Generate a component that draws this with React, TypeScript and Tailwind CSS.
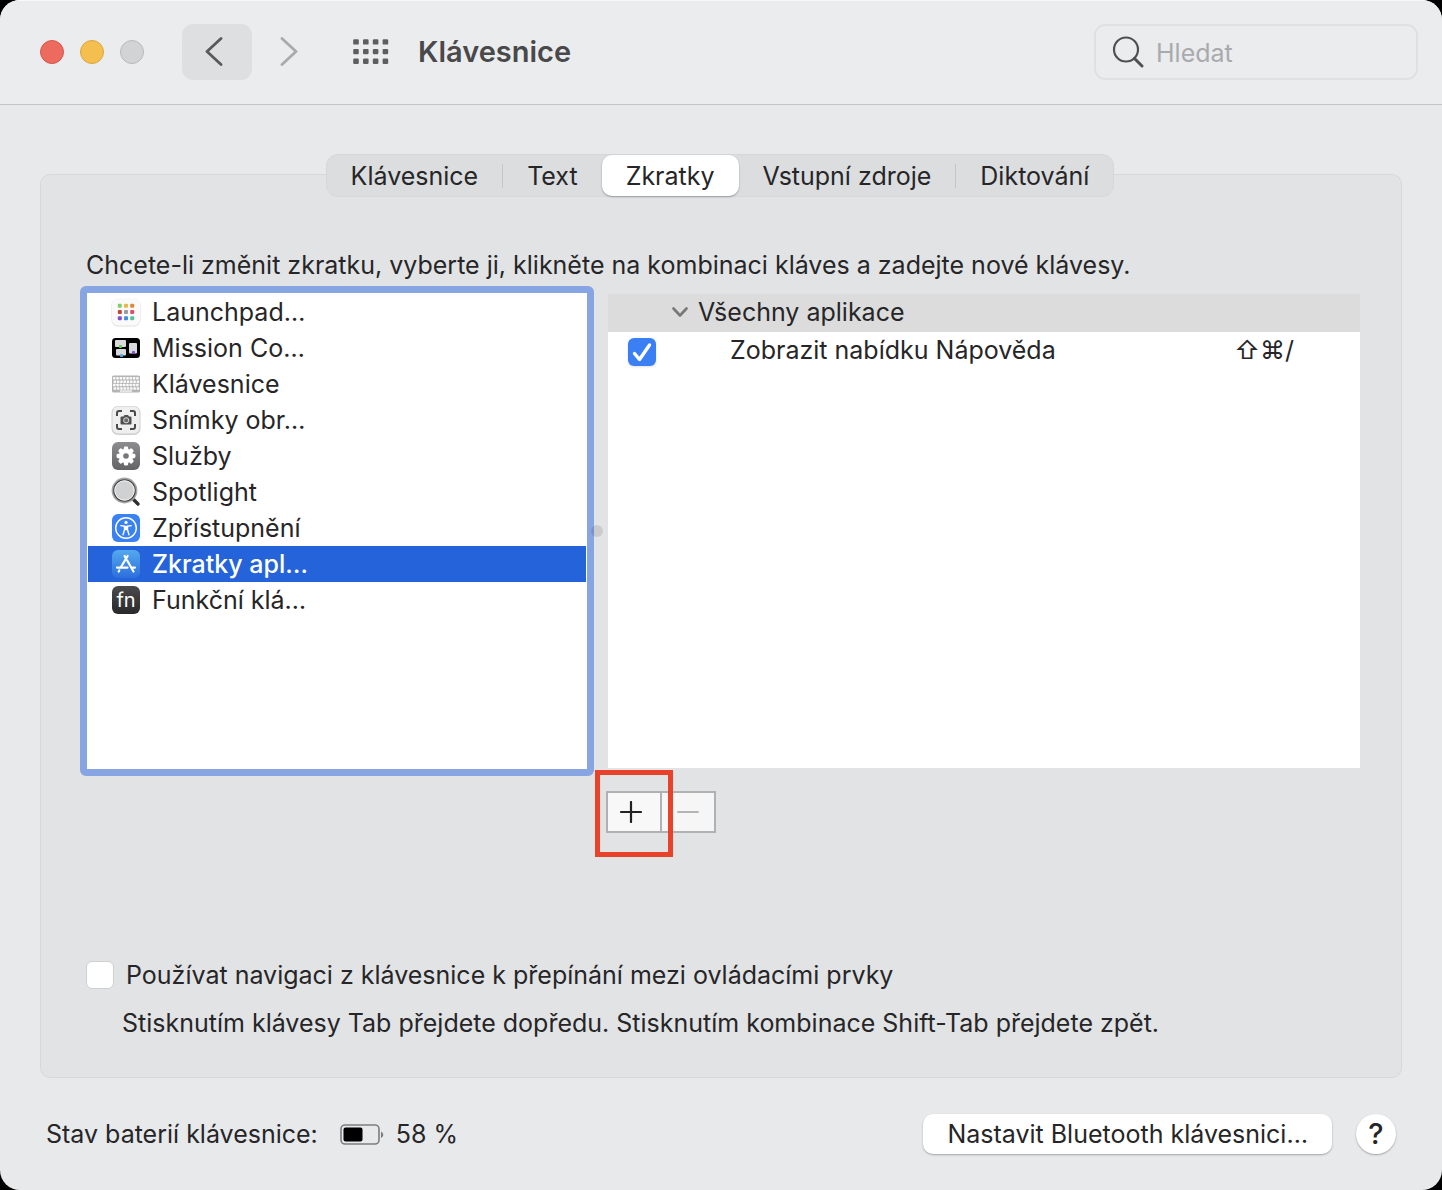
import React, { useState } from "react";
import { clsx } from "clsx";

const TABS = ["Klávesnice", "Text", "Zkratky", "Vstupní zdroje", "Diktování"];

function LaunchpadIcon() {
  const colors = [
    "#7fd069", "#e9b64a", "#dc8a3c",
    "#c4453c", "#9a9ca2", "#dd4f6a",
    "#8a4fd0", "#3f8fe0", "#55c3a0",
  ];
  return (
    <svg viewBox="0 0 30 30" className="size-[30px]" aria-hidden="true">
      <rect x="0.5" y="1.5" width="29" height="28" rx="6.5" fill="#e2e2e4" />
      <rect x="1" y="1" width="28" height="27.5" rx="6" fill="#fafafa" />
      {colors.map((c, i) => (
        <rect
          key={c}
          x={6.8 + (i % 3) * 6.2}
          y={6.8 + Math.floor(i / 3) * 6.2}
          width="4"
          height="4"
          rx="1"
          fill={c}
        />
      ))}
    </svg>
  );
}

function MissionControlIcon() {
  return (
    <svg viewBox="0 0 30 30" className="size-[30px]" aria-hidden="true">
      <rect x="1" y="5" width="28" height="20" rx="3.5" fill="#000" />
      <rect x="4" y="7" width="11" height="7" rx="1" fill="#d9dadb" />
      <rect x="5" y="16" width="10" height="6.5" rx="1" fill="#d9dadb" />
      <rect x="18" y="10" width="8" height="10.5" rx="1" fill="#d9d9de" />
      <rect x="8" y="12" width="3" height="3" rx="0.8" fill="#5fd14f" />
      <rect x="9" y="21" width="3" height="3" rx="0.8" fill="#4cb0e6" />
      <rect x="21" y="18" width="3" height="3" rx="0.8" fill="#8550cc" />
    </svg>
  );
}

function KeyboardIcon() {
  const rows = [8, 11.4, 14.8, 18.2];
  return (
    <svg viewBox="0 0 30 30" className="size-[30px]" aria-hidden="true">
      <rect x="1" y="6.5" width="28" height="17" rx="1.5" fill="#b4b4b5" />
      {rows.map((y, r) =>
        Array.from({ length: 8 }, (_, i) => (
          <rect
            key={`${r}-${i}`}
            x={2 + i * 3.3 + (r % 2) * 0.6}
            y={y}
            width="2.5"
            height="2.5"
            rx="0.4"
            fill="#fafafa"
          />
        ))
      )}
      <rect x="9" y="21.4" width="12" height="1.3" fill="#fafafa" />
    </svg>
  );
}

function ScreenshotIcon() {
  return (
    <svg viewBox="0 0 30 30" className="size-[30px]" aria-hidden="true">
      <rect x="0.5" y="1" width="29" height="29" rx="6.5" fill="#cfcfd0" />
      <rect x="1.5" y="1.5" width="27" height="27" rx="6" fill="#efefef" />
      <path
        d="M6 11V8a2 2 0 0 1 2-2h3M19 6h3a2 2 0 0 1 2 2v3M24 19v3a2 2 0 0 1-2 2h-3M11 24H8a2 2 0 0 1-2-2v-3"
        fill="none"
        stroke="#4a4a4c"
        strokeWidth="2"
      />
      <path
        d="M10.5 11.5h2l1-1.5h3.5l1 1.5h1.5a1 1 0 0 1 1 1v6a1 1 0 0 1-1 1h-9a1 1 0 0 1-1-1v-6a1 1 0 0 1 1-1z"
        fill="#4f4f51"
      />
      <circle cx="15.2" cy="15.3" r="2.6" fill="#6b6b6d" stroke="#e8e8e8" strokeWidth="0.9" />
    </svg>
  );
}

function GearIcon() {
  return (
    <svg viewBox="0 0 30 30" className="size-[30px]" aria-hidden="true">
      <defs>
        <linearGradient id="gear-bg" x1="0" y1="0" x2="0" y2="1">
          <stop offset="0" stopColor="#8d8d90" />
          <stop offset="1" stopColor="#636366" />
        </linearGradient>
      </defs>
      <rect x="1" y="1" width="28" height="28" rx="6" fill="url(#gear-bg)" />
      {[0, 45, 90, 135].map((a) => (
        <rect
          key={a}
          x="12.8"
          y="5.6"
          width="4.4"
          height="18.8"
          rx="1.4"
          fill="#fff"
          transform={`rotate(${a} 15 15)`}
        />
      ))}
      <circle cx="15" cy="15" r="7.2" fill="#fff" />
      <circle cx="15" cy="15" r="2.8" fill="#77777a" />
    </svg>
  );
}

function SpotlightIcon() {
  return (
    <svg viewBox="0 0 30 30" className="size-[30px]" aria-hidden="true">
      <path d="M21.5 21.5l5.5 5.5" stroke="#2d2d2e" strokeWidth="3.4" strokeLinecap="round" />
      <circle cx="13.5" cy="13.5" r="12" fill="#d0d1d3" stroke="#a5a5a6" strokeWidth="1.8" />
      <circle cx="13.5" cy="13.5" r="10.8" fill="none" stroke="#444" strokeWidth="1.1" />
      <circle cx="13.5" cy="13.5" r="9.6" fill="none" stroke="#ececec" strokeWidth="1" />
    </svg>
  );
}

function AccessibilityIcon() {
  return (
    <svg viewBox="0 0 30 30" className="size-[30px]" aria-hidden="true">
      <rect x="1" y="1" width="28" height="28" rx="6" fill="#3a82f3" />
      <circle cx="15" cy="15" r="10.3" fill="none" stroke="#fff" strokeWidth="1.4" />
      <circle cx="15" cy="9.4" r="1.6" fill="#fff" />
      <path
        d="M9.8 12.6l3.7.7v3.4l-1.5 5M20.2 12.6l-3.7.7v3.4l1.5 5"
        fill="none"
        stroke="#fff"
        strokeWidth="1.4"
        strokeLinecap="round"
        strokeLinejoin="round"
      />
      <path d="M13.2 12.8h3.6v4.4h-3.6z" fill="#fff" />
    </svg>
  );
}

function AppStoreIcon() {
  return (
    <svg viewBox="0 0 30 30" className="size-[30px]" aria-hidden="true">
      <defs>
        <linearGradient id="store-bg" x1="0" y1="0" x2="0" y2="1">
          <stop offset="0" stopColor="#54a9ee" />
          <stop offset="1" stopColor="#2c6fdc" />
        </linearGradient>
      </defs>
      <rect x="1" y="1" width="28" height="28" rx="6" fill="url(#store-bg)" />
      <g stroke="#fff" strokeWidth="2.2" strokeLinecap="round">
        <path d="M16.6 7L10 18" />
        <path d="M13.6 7l1.3 2.2" />
        <path d="M16.2 11.500l6.300 11" />
        <path d="M6 18.600h10.500M21.600 18.600H24" />
        <path d="M8.300 21.500l-.6 1" />
      </g>
    </svg>
  );
}

function FnIcon() {
  return (
    <span className="grid size-7 place-items-center rounded-md bg-linear-to-b from-[#4b4b4d] to-[#29292b] text-xl leading-none text-white">
      fn
    </span>
  );
}

const SECTIONS = [
  { label: "Launchpad…", Icon: LaunchpadIcon },
  { label: "Mission Co…", Icon: MissionControlIcon },
  { label: "Klávesnice", Icon: KeyboardIcon },
  { label: "Snímky obr…", Icon: ScreenshotIcon },
  { label: "Služby", Icon: GearIcon },
  { label: "Spotlight", Icon: SpotlightIcon },
  { label: "Zpřístupnění", Icon: AccessibilityIcon },
  { label: "Zkratky apl…", Icon: AppStoreIcon },
  { label: "Funkční klá…", Icon: FnIcon },
];

function Checkbox({ id, defaultChecked = false }: { id: string; defaultChecked?: boolean }) {
  return (
    <span className="grid size-7 shrink-0">
      <input
        id={id}
        type="checkbox"
        defaultChecked={defaultChecked}
        className="peer col-start-1 row-start-1 size-7 appearance-none rounded-md border border-[#cfcfd1] bg-white checked:border-transparent checked:bg-[#3a80f4] checked:shadow-sm"
      />
      <svg
        viewBox="0 0 28 28"
        className="pointer-events-none col-start-1 row-start-1 hidden size-7 peer-checked:block"
        aria-hidden="true"
      >
        <path
          d="M6.500 15.500l5 6L21.500 7"
          fill="none"
          stroke="#fff"
          strokeWidth="3.400"
          strokeLinecap="round"
          strokeLinejoin="round"
        />
      </svg>
    </span>
  );
}

function Toolbar() {
  return (
    <header className="flex h-[105px] items-center border-b border-[#c3c4c6] bg-[#ebecee] pr-6 pl-10 shadow-[inset_0_1px_0_#f8f8f9]">
      <div className="flex gap-4">
        <button aria-label="Zavřít" className="size-6 rounded-full border border-[#d8574d] bg-[#ec6a5e]" />
        <button aria-label="Minimalizovat" className="size-6 rounded-full border border-[#dba63f] bg-[#f5bf4f]" />
        <button aria-label="Zvětšit" className="size-6 rounded-full border border-[#b9babb] bg-[#d2d3d4]" />
      </div>
      <button aria-label="Zpět" className="ml-[38px] grid h-14 w-[70px] place-items-center rounded-[11px] bg-[#dedfe1]">
        <svg viewBox="0 0 20 30" className="mr-1.5 h-[30px] w-5" aria-hidden="true">
          <path d="M17 1.500L3 14.500l14 13" fill="none" stroke="#58595b" strokeWidth="2.800" strokeLinecap="round" strokeLinejoin="round" />
        </svg>
      </button>
      <button aria-label="Vpřed" className="ml-[27px]">
        <svg viewBox="0 0 20 30" className="h-[30px] w-5" aria-hidden="true">
          <path d="M3 1.500l14 13-14 13" fill="none" stroke="#a9aaac" strokeWidth="2.800" strokeLinecap="round" strokeLinejoin="round" />
        </svg>
      </button>
      <button aria-label="Zobrazit vše" className="ml-[54px]">
        <svg viewBox="0 0 36 26" className="h-[26px] w-9" fill="#5d5e60" aria-hidden="true">
          {[0, 1, 2].map((r) =>
            [0, 1, 2, 3].map((c) => (
              <rect key={`${r}-${c}`} x={0.2 + c * 9.8} y={0.2 + r * 9.7} width="5.600" height="5.400" rx="1.200" />
            ))
          )}
        </svg>
      </button>
      <h1 className="ml-[29px] text-[29px] font-semibold text-[#49494b]">Klávesnice</h1>
      <label className="ml-auto flex h-14 w-[324px] items-center rounded-[11px] border-2 border-[#dfe0e2] px-4">
        <svg viewBox="0 0 32 32" className="size-8 shrink-0" fill="none" stroke="#4f5052" strokeLinecap="round" aria-hidden="true">
          <circle cx="14" cy="13.500" r="12" strokeWidth="2.200" />
          <path d="M22.500 22.500l7.500 7.500" strokeWidth="3" />
        </svg>
        <input
          type="search"
          aria-label="Hledat"
          placeholder="Hledat"
          className="ml-3 w-full min-w-0 bg-transparent pt-0.5 outline-none placeholder:text-[#a9aaac]"
        />
      </label>
    </header>
  );
}

function Tabs() {
  const [active, setActive] = useState(2);

  return (
    <div role="tablist" className="-mt-[21px] flex h-[43px] self-center rounded-xl border border-[#d6d7d9] bg-[#dcdddf]">
      {TABS.map((tab, i) => (
        <button
          key={tab}
          role="tab"
          aria-selected={i === active}
          onClick={() => setActive(i)}
          className={clsx(
            "flex items-center",
            i === active && "rounded-[10px] bg-white shadow-[0_1px_2px_rgba(0,0,0,0.3)]"
          )}
        >
          <span className="px-6">{tab}</span>
          {i < TABS.length - 1 && i !== active && i !== active - 1 && (
            <span className="h-6 w-px bg-[#c5c6c8]" />
          )}
        </button>
      ))}
    </div>
  );
}

function SectionList() {
  const [selected, setSelected] = useState(7);

  return (
    <ul className="h-[490px] rounded-md border-[7px] border-[#87a5e3] bg-white p-px">
      {SECTIONS.map(({ label, Icon }, i) => (
        <li key={label}>
          <button
            onClick={() => setSelected(i)}
            className={clsx(
              "flex h-9 w-full items-center pl-[23px] text-left",
              i === selected && "bg-[#2463d9] font-medium text-white"
            )}
          >
            <span className="grid size-[30px] place-items-center">
              <Icon />
            </span>
            <span className="ml-[11px]">{label}</span>
          </button>
        </li>
      ))}
    </ul>
  );
}

function ShortcutTable() {
  return (
    <div className="my-2 bg-white">
      <table className="w-full">
        <thead>
          <tr className="h-[38px] bg-[#dcdcdc]">
            <th colSpan={3} className="p-0 pb-0.5 pl-16 text-left font-normal">
              <button className="flex items-center gap-2.5">
                <svg viewBox="0 0 16 10" className="h-2.5 w-4" aria-hidden="true">
                  <path d="M1.500 1.500L8 8.500l6.500-7" fill="none" stroke="#77787a" strokeWidth="2.600" strokeLinecap="round" strokeLinejoin="round" />
                </svg>
                Všechny aplikace
              </button>
            </th>
          </tr>
        </thead>
        <tbody>
          <tr className="h-9">
            <td className="w-[122px] p-0 pt-1 pl-5">
              <Checkbox id="show-help" defaultChecked />
            </td>
            <td className="p-0">
              <label htmlFor="show-help">Zobrazit nabídku Nápověda</label>
            </td>
            <td className="p-0 pr-[66px] text-right">⇧⌘/</td>
          </tr>
        </tbody>
      </table>
    </div>
  );
}

export default function App(): React.ReactElement {
  return (
    <div className="min-h-screen bg-black">
      <div className="flex min-h-screen flex-col overflow-hidden rounded-[20px] bg-[#e8e9eb] font-['Inter','DejaVu_Sans',sans-serif] text-[25px] leading-9 text-[#262628]">
        <Toolbar />

        <main className="mx-10 mt-[69px] flex flex-1 flex-col rounded-[10px] border border-[#d7d8da] bg-[#e2e3e5] pr-[41px] pb-9 pl-[39px]">
          <Tabs />
          <p className="mt-[50px] ml-1.5">
            Chcete-li změnit zkratku, vyberte ji, klikněte na kombinaci kláves a zadejte nové klávesy.
          </p>

          <div className="mt-[3px] grid grid-cols-[514fr_14px_752fr]">
            <SectionList />
            <div className="flex items-center">
              <span className="-ml-[3px] size-3 shrink-0 rounded-full bg-black/10" />
            </div>
            <ShortcutTable />
            <div className="col-start-3 -ml-0.5 mt-[15px] flex">
              <button
                aria-label="Přidat"
                className="relative grid h-[42px] w-14 place-items-center border-2 border-[#b0b1b3] bg-[#f8f8f8]"
              >
                <svg viewBox="0 0 22 22" className="mr-1.5 size-[22px]" aria-hidden="true">
                  <path d="M11 1v20M1 11h20" stroke="#222" strokeWidth="2.200" strokeLinecap="round" />
                </svg>
                <span className="absolute -top-[23px] -left-[13px] z-10 h-[87px] w-[78px] border-5 border-[#e8432a]" />
              </button>
              <button
                aria-label="Odebrat"
                className="-ml-0.5 grid h-[42px] w-14 place-items-center border-2 border-[#b0b1b3] bg-[#f6f6f6]"
              >
                <svg viewBox="0 0 22 22" className="size-[22px]" aria-hidden="true">
                  <path d="M1 11h20" stroke="#b5b5b7" strokeWidth="2" strokeLinecap="round" />
                </svg>
              </button>
            </div>
          </div>

          <div className="mt-auto ml-1.5 flex items-center gap-3">
            <Checkbox id="keyboard-nav" />
            <label htmlFor="keyboard-nav">
              Používat navigaci z klávesnice k přepínání mezi ovládacími prvky
            </label>
          </div>
          <p className="mt-3 ml-[42px]">
            Stisknutím klávesy Tab přejdete dopředu. Stisknutím kombinace Shift-Tab přejdete zpět.
          </p>
        </main>

        <footer className="flex h-28 items-center px-[46px]">
          <span>Stav baterií klávesnice:</span>
          <svg viewBox="0 0 44 22" className="mr-3 ml-[22px] h-[22px] w-11" aria-hidden="true">
            <rect x="1" y="2" width="38" height="19" rx="4" fill="none" stroke="#7c7d7f" strokeWidth="1.600" />
            <rect x="3.500" y="4.500" width="19" height="14" rx="2" fill="#000" />
            <path d="M41 8.500c3 1.500 3 5 0 6.500z" fill="#7c7d7f" />
          </svg>
          <span>58 %</span>
          <button className="ml-auto h-10 rounded-[10px] bg-white px-6 shadow-[0_1px_2px_rgba(0,0,0,0.3)]">
            Nastavit Bluetooth klávesnici…
          </button>
          <button
            aria-label="Nápověda"
            className="ml-6 size-10 rounded-full bg-white text-[29px] font-medium shadow-[0_1px_2px_rgba(0,0,0,0.3)]"
          >
            ?
          </button>
        </footer>
      </div>
    </div>
  );
}
